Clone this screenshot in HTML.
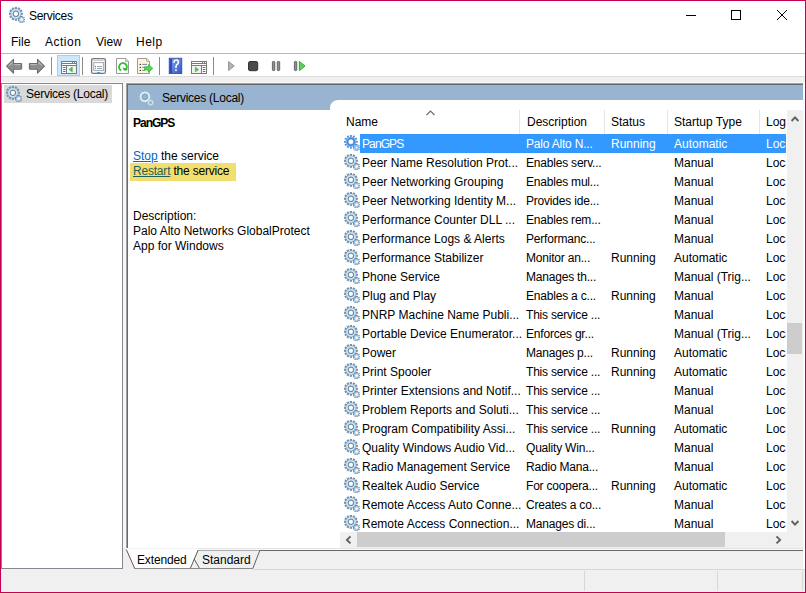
<!DOCTYPE html>
<html><head><meta charset="utf-8">
<style>
*{margin:0;padding:0;box-sizing:border-box}
html,body{width:806px;height:593px;overflow:hidden;background:#fff}
body{position:relative;font-family:"Liberation Sans",sans-serif;font-size:12px;color:#000}
.a{position:absolute}
.t{position:absolute;white-space:pre;line-height:15px;font-size:12px}
.frame{position:absolute;left:0;top:0;width:806px;height:593px;border:1px solid #c30052;pointer-events:none;z-index:50}
.sep{position:absolute;width:1px;height:18px;top:57px;background:#8c8c8c}
#list{position:absolute;left:338px;top:134px;width:448px;height:398px;overflow:hidden}
.row{position:absolute;left:0;width:448px;height:19px}
.rg{position:absolute;left:6px;top:1px}
.hl{position:absolute;left:22px;top:0;width:426px;height:19px;background:#3399ff}
.c{position:absolute;top:3px;white-space:pre;line-height:15px}
.sel .c{color:#fff}
.sel .cn{letter-spacing:-0.9px}
.cn{left:24px}
.cd{left:188px;letter-spacing:-0.2px}
.cs{left:273px}
.ct{left:336px}
.cl{left:428px}
.hd{position:absolute;top:115px;white-space:pre;line-height:15px}
.hsep{position:absolute;top:110px;width:1px;height:24px;background:#e5e5e5}
</style></head><body>

<svg width="0" height="0" style="position:absolute">
<defs>
 <radialGradient id="gg" cx="0.5" cy="0.5" r="0.5">
  <stop offset="0.5" stop-color="#8aa0b8"/>
  <stop offset="0.64" stop-color="#d6f0fa"/>
  <stop offset="0.86" stop-color="#b3d6ea"/>
  <stop offset="1" stop-color="#7c9cbc"/>
 </radialGradient>
 <radialGradient id="gs" cx="0.5" cy="0.5" r="0.5">
  <stop offset="0.3" stop-color="#ffffff"/>
  <stop offset="0.45" stop-color="#8aa6c2"/>
  <stop offset="0.7" stop-color="#c4e4f4"/>
  <stop offset="1" stop-color="#6d91b8"/>
 </radialGradient>
 <symbol id="gear" viewBox="0 0 16 16">
  <rect x="5.80" y="-0.20" width="2.20" height="2.40" fill="#7592b2" transform="rotate(0.0 6.9 6.8)"/><rect x="5.80" y="-0.20" width="2.20" height="2.40" fill="#7592b2" transform="rotate(30.0 6.9 6.8)"/><rect x="5.80" y="-0.20" width="2.20" height="2.40" fill="#7592b2" transform="rotate(60.0 6.9 6.8)"/><rect x="5.80" y="-0.20" width="2.20" height="2.40" fill="#7592b2" transform="rotate(90.0 6.9 6.8)"/><rect x="5.80" y="-0.20" width="2.20" height="2.40" fill="#7592b2" transform="rotate(120.0 6.9 6.8)"/><rect x="5.80" y="-0.20" width="2.20" height="2.40" fill="#7592b2" transform="rotate(150.0 6.9 6.8)"/><rect x="5.80" y="-0.20" width="2.20" height="2.40" fill="#7592b2" transform="rotate(180.0 6.9 6.8)"/><rect x="5.80" y="-0.20" width="2.20" height="2.40" fill="#7592b2" transform="rotate(210.0 6.9 6.8)"/><rect x="5.80" y="-0.20" width="2.20" height="2.40" fill="#7592b2" transform="rotate(240.0 6.9 6.8)"/><rect x="5.80" y="-0.20" width="2.20" height="2.40" fill="#7592b2" transform="rotate(270.0 6.9 6.8)"/><rect x="5.80" y="-0.20" width="2.20" height="2.40" fill="#7592b2" transform="rotate(300.0 6.9 6.8)"/><rect x="5.80" y="-0.20" width="2.20" height="2.40" fill="#7592b2" transform="rotate(330.0 6.9 6.8)"/>
  <circle cx="6.9" cy="6.8" r="5.4" fill="url(#gg)"/>
  <circle cx="6.9" cy="6.8" r="2.9" fill="none" stroke="#66788e" stroke-width="0.9" opacity="0.8"/>
  <circle cx="6.9" cy="6.8" r="2.1" fill="#fff"/>
  <rect x="11.95" y="8.90" width="1.30" height="1.70" fill="#6a87a6" transform="rotate(10.0 12.6 12.6)"/><rect x="11.95" y="8.90" width="1.30" height="1.70" fill="#6a87a6" transform="rotate(50.0 12.6 12.6)"/><rect x="11.95" y="8.90" width="1.30" height="1.70" fill="#6a87a6" transform="rotate(90.0 12.6 12.6)"/><rect x="11.95" y="8.90" width="1.30" height="1.70" fill="#6a87a6" transform="rotate(130.0 12.6 12.6)"/><rect x="11.95" y="8.90" width="1.30" height="1.70" fill="#6a87a6" transform="rotate(170.0 12.6 12.6)"/><rect x="11.95" y="8.90" width="1.30" height="1.70" fill="#6a87a6" transform="rotate(210.0 12.6 12.6)"/><rect x="11.95" y="8.90" width="1.30" height="1.70" fill="#6a87a6" transform="rotate(250.0 12.6 12.6)"/><rect x="11.95" y="8.90" width="1.30" height="1.70" fill="#6a87a6" transform="rotate(290.0 12.6 12.6)"/><rect x="11.95" y="8.90" width="1.30" height="1.70" fill="#6a87a6" transform="rotate(330.0 12.6 12.6)"/>
  <circle cx="12.6" cy="12.6" r="2.6" fill="#a3c2da"/>
  <circle cx="12.6" cy="12.6" r="1.7" fill="#d6ecf7"/>
  <circle cx="12.6" cy="12.6" r="0.8" fill="#fff"/>
 </symbol>
 <symbol id="gear3" viewBox="0 0 16 16">
  <rect x="6.00" y="-0.10" width="1.80" height="2.30" fill="#4f8fdc" transform="rotate(0.0 6.9 6.8)"/><rect x="6.00" y="-0.10" width="1.80" height="2.30" fill="#4f8fdc" transform="rotate(30.0 6.9 6.8)"/><rect x="6.00" y="-0.10" width="1.80" height="2.30" fill="#4f8fdc" transform="rotate(60.0 6.9 6.8)"/><rect x="6.00" y="-0.10" width="1.80" height="2.30" fill="#4f8fdc" transform="rotate(90.0 6.9 6.8)"/><rect x="6.00" y="-0.10" width="1.80" height="2.30" fill="#4f8fdc" transform="rotate(120.0 6.9 6.8)"/><rect x="6.00" y="-0.10" width="1.80" height="2.30" fill="#4f8fdc" transform="rotate(150.0 6.9 6.8)"/><rect x="6.00" y="-0.10" width="1.80" height="2.30" fill="#4f8fdc" transform="rotate(180.0 6.9 6.8)"/><rect x="6.00" y="-0.10" width="1.80" height="2.30" fill="#4f8fdc" transform="rotate(210.0 6.9 6.8)"/><rect x="6.00" y="-0.10" width="1.80" height="2.30" fill="#4f8fdc" transform="rotate(240.0 6.9 6.8)"/><rect x="6.00" y="-0.10" width="1.80" height="2.30" fill="#4f8fdc" transform="rotate(270.0 6.9 6.8)"/><rect x="6.00" y="-0.10" width="1.80" height="2.30" fill="#4f8fdc" transform="rotate(300.0 6.9 6.8)"/><rect x="6.00" y="-0.10" width="1.80" height="2.30" fill="#4f8fdc" transform="rotate(330.0 6.9 6.8)"/>
  <circle cx="6.9" cy="6.8" r="5.2" fill="#7fb6ee"/>
  <circle cx="6.9" cy="6.8" r="3.4" fill="none" stroke="#3f7fd0" stroke-width="1.2"/>
  <circle cx="6.9" cy="6.8" r="2.3" fill="#fff"/>
  <rect x="12.00" y="9.00" width="1.20" height="1.40" fill="#4f8fdc" transform="rotate(10.0 12.6 12.6)"/><rect x="12.00" y="9.00" width="1.20" height="1.40" fill="#4f8fdc" transform="rotate(50.0 12.6 12.6)"/><rect x="12.00" y="9.00" width="1.20" height="1.40" fill="#4f8fdc" transform="rotate(90.0 12.6 12.6)"/><rect x="12.00" y="9.00" width="1.20" height="1.40" fill="#4f8fdc" transform="rotate(130.0 12.6 12.6)"/><rect x="12.00" y="9.00" width="1.20" height="1.40" fill="#4f8fdc" transform="rotate(170.0 12.6 12.6)"/><rect x="12.00" y="9.00" width="1.20" height="1.40" fill="#4f8fdc" transform="rotate(210.0 12.6 12.6)"/><rect x="12.00" y="9.00" width="1.20" height="1.40" fill="#4f8fdc" transform="rotate(250.0 12.6 12.6)"/><rect x="12.00" y="9.00" width="1.20" height="1.40" fill="#4f8fdc" transform="rotate(290.0 12.6 12.6)"/><rect x="12.00" y="9.00" width="1.20" height="1.40" fill="#4f8fdc" transform="rotate(330.0 12.6 12.6)"/>
  <circle cx="12.6" cy="12.6" r="2.7" fill="#8fc0f0"/>
  <circle cx="12.6" cy="12.6" r="0.9" fill="#fff"/>
 </symbol>
 <symbol id="gear2" viewBox="0 0 16 16">
  <rect x="6.20" y="0.00" width="1.40" height="2.20" fill="#a3b9d2" transform="rotate(0.0 6.9 6.8)"/><rect x="6.20" y="0.00" width="1.40" height="2.20" fill="#a3b9d2" transform="rotate(30.0 6.9 6.8)"/><rect x="6.20" y="0.00" width="1.40" height="2.20" fill="#a3b9d2" transform="rotate(60.0 6.9 6.8)"/><rect x="6.20" y="0.00" width="1.40" height="2.20" fill="#a3b9d2" transform="rotate(90.0 6.9 6.8)"/><rect x="6.20" y="0.00" width="1.40" height="2.20" fill="#a3b9d2" transform="rotate(120.0 6.9 6.8)"/><rect x="6.20" y="0.00" width="1.40" height="2.20" fill="#a3b9d2" transform="rotate(150.0 6.9 6.8)"/><rect x="6.20" y="0.00" width="1.40" height="2.20" fill="#a3b9d2" transform="rotate(180.0 6.9 6.8)"/><rect x="6.20" y="0.00" width="1.40" height="2.20" fill="#a3b9d2" transform="rotate(210.0 6.9 6.8)"/><rect x="6.20" y="0.00" width="1.40" height="2.20" fill="#a3b9d2" transform="rotate(240.0 6.9 6.8)"/><rect x="6.20" y="0.00" width="1.40" height="2.20" fill="#a3b9d2" transform="rotate(270.0 6.9 6.8)"/><rect x="6.20" y="0.00" width="1.40" height="2.20" fill="#a3b9d2" transform="rotate(300.0 6.9 6.8)"/><rect x="6.20" y="0.00" width="1.40" height="2.20" fill="#a3b9d2" transform="rotate(330.0 6.9 6.8)"/>
  <circle cx="6.9" cy="6.8" r="4.1" fill="none" stroke="#d6f1fb" stroke-width="2.2"/>
  <circle cx="6.9" cy="6.8" r="2.9" fill="none" stroke="#7d8ea3" stroke-width="0.8"/>
  <rect x="12.10" y="9.10" width="1.00" height="1.50" fill="#b2c6da" transform="rotate(10.0 12.6 12.6)"/><rect x="12.10" y="9.10" width="1.00" height="1.50" fill="#b2c6da" transform="rotate(50.0 12.6 12.6)"/><rect x="12.10" y="9.10" width="1.00" height="1.50" fill="#b2c6da" transform="rotate(90.0 12.6 12.6)"/><rect x="12.10" y="9.10" width="1.00" height="1.50" fill="#b2c6da" transform="rotate(130.0 12.6 12.6)"/><rect x="12.10" y="9.10" width="1.00" height="1.50" fill="#b2c6da" transform="rotate(170.0 12.6 12.6)"/><rect x="12.10" y="9.10" width="1.00" height="1.50" fill="#b2c6da" transform="rotate(210.0 12.6 12.6)"/><rect x="12.10" y="9.10" width="1.00" height="1.50" fill="#b2c6da" transform="rotate(250.0 12.6 12.6)"/><rect x="12.10" y="9.10" width="1.00" height="1.50" fill="#b2c6da" transform="rotate(290.0 12.6 12.6)"/><rect x="12.10" y="9.10" width="1.00" height="1.50" fill="#b2c6da" transform="rotate(330.0 12.6 12.6)"/>
  <circle cx="12.6" cy="12.6" r="2.1" fill="none" stroke="#d0e4ef" stroke-width="1.1"/>
 </symbol>
</defs></svg>
<div class="frame"></div>

<!-- title bar -->
<svg class="a" style="left:9px;top:7px" width="16" height="16"><use href="#gear"/></svg>
<div class="t" style="left:29px;top:9px;letter-spacing:-0.3px">Services</div>
<div class="a" style="left:686px;top:15px;width:10px;height:1px;background:#000"></div>
<div class="a" style="left:731px;top:10px;width:10px;height:10px;border:1px solid #000"></div>
<svg class="a" style="left:776px;top:9px" width="12" height="12"><path d="M1 1L11 11M11 1L1 11" stroke="#000" stroke-width="1"/></svg>

<!-- menu -->
<div class="t" style="left:11px;top:35px">File</div>
<div class="t" style="left:45px;top:35px;letter-spacing:0.5px">Action</div>
<div class="t" style="left:96px;top:35px">View</div>
<div class="t" style="left:136px;top:35px;letter-spacing:0.5px">Help</div>
<div class="a" style="left:1px;top:53px;width:804px;height:1px;background:#b9b9b9"></div>

<!-- toolbar -->

<svg class="a" style="left:0;top:54px" width="320" height="22" viewBox="0 54 320 22">
 <defs>
  <linearGradient id="ag" x1="0" y1="0" x2="0" y2="1">
   <stop offset="0" stop-color="#b8b8b8"/><stop offset="0.5" stop-color="#8a8a8a"/><stop offset="1" stop-color="#a0a0a0"/>
  </linearGradient>
  <linearGradient id="hb" x1="0" y1="0" x2="1" y2="1">
   <stop offset="0" stop-color="#8aa6ee"/><stop offset="1" stop-color="#3056c8"/>
  </linearGradient>
 </defs>
 <!-- back arrow -->
 <path d="M6.6,66.2 L13.5,59.4 L13.5,63.6 L21,63.6 Q21.6,63.6 21.6,64.2 L21.6,68.6 Q21.6,69.2 21,69.2 L13.5,69.2 L13.5,73.2 Z" fill="url(#ag)" stroke="#6c6c6c" stroke-width="1.1" stroke-linejoin="round"/>
 <path d="M8.4,66.2 L12.4,62.3 M14.3,64.6 L20.5,64.6" stroke="#d6d6d6" stroke-width="0.7" fill="none"/>
 <!-- forward arrow -->
 <path d="M44.4,66.2 L37.5,59.4 L37.5,63.6 L30,63.6 Q29.4,63.6 29.4,64.2 L29.4,68.6 Q29.4,69.2 30,69.2 L37.5,69.2 L37.5,73.2 Z" fill="url(#ag)" stroke="#6c6c6c" stroke-width="1.1" stroke-linejoin="round"/>
 <path d="M42.6,66.2 L38.6,62.3 M36.7,64.6 L30.5,64.6" stroke="#d6d6d6" stroke-width="0.7" fill="none"/>

 <!-- pressed button -->
 <rect x="57.5" y="55.5" width="22" height="20" fill="#cce8ff" stroke="#99d1ff" stroke-width="1"/>
 <!-- console tree icon -->
 <rect x="61.5" y="61.5" width="15" height="12" fill="#fff" stroke="#7b7b7b" stroke-width="1"/>
 <rect x="62" y="63" width="14" height="1" fill="#7b7b7b"/>
 <rect x="62" y="65" width="14" height="1" fill="#7b7b7b"/>
 <rect x="72" y="62" width="1" height="1" fill="#7b7b7b"/><rect x="74" y="62" width="1" height="1" fill="#7b7b7b"/>
 <rect x="67" y="66" width="9" height="7" fill="#f2f2f2"/>
 <rect x="66" y="66" width="1" height="7" fill="#727c94"/>
 <path d="M63.4,67.5 H65.2 M63.4,69.5 H65.2 M63.4,71.5 H65.2" stroke="#3c78c8" stroke-width="1.1" stroke-linecap="round"/>
 <path d="M72.3,67 L69,69.5 L72.3,72 Z" fill="#4cc04c" stroke="#3ab03a" stroke-width="0.5"/>

 <!-- properties icon -->
 <rect x="91.6" y="58.6" width="13.8" height="14.8" rx="1.5" fill="#fff" stroke="#767676" stroke-width="1.3"/>
 <path d="M92.5,60.5 H103.5" stroke="#c8c8c8" stroke-width="1"/>
 <rect x="93.8" y="62.6" width="9.6" height="8" fill="#fff" stroke="#a3a3b5" stroke-width="1"/>
 <circle cx="95.4" cy="66.5" r="0.7" fill="#00a8ff"/>
 <circle cx="95.4" cy="68.5" r="0.6" fill="#777"/>
 <path d="M97,66.5 H102 M97,68.5 H102" stroke="#8a8a8a" stroke-width="0.8"/>
 <path d="M97,72.6 H100.2" stroke="#14b4ff" stroke-width="1.2"/>

 <!-- refresh icon -->
 <path d="M116.5,58.5 H125.8 L128.5,61.2 V73.5 H116.5 Z" fill="#fff" stroke="#9b9b9b" stroke-width="1"/>
 <path d="M125.6,58.8 V61.4 H128.3" fill="#e8e8e8" stroke="#9b9b9b" stroke-width="0.8"/>
 <path d="M125.2,70.2 A3.9,3.9 0 1 0 121.2,70.5" fill="none" stroke="#33c033" stroke-width="1.9"/>
 <path d="M122.5,67.2 L124,70.6 L127.8,69.6 Z" fill="#20b020"/>

 <!-- export list icon -->
 <path d="M137.5,58.5 H146.8 L149.5,61.2 V73.5 H137.5 Z" fill="#fdf5da" stroke="#9b9b9b" stroke-width="1"/>
 <path d="M146.6,58.8 V61.4 H149.3" fill="#eee" stroke="#9b9b9b" stroke-width="0.8"/>
 <circle cx="140.3" cy="64.4" r="0.7" fill="#222"/><circle cx="140.3" cy="67.4" r="0.7" fill="#222"/><circle cx="140.3" cy="70.4" r="0.7" fill="#222"/>
 <path d="M142.2,64.4 H147 M142.2,67.4 H145 M142.2,70.4 H145" stroke="#7070a8" stroke-width="0.9"/>
 <path d="M144.6,66.8 H148.4 V64.6 L152.8,68.4 L148.4,72.2 V70 H144.6 Z" fill="#5ad25a" stroke="#36b436" stroke-width="0.8" stroke-linejoin="round"/>

 <!-- help icon -->
 <rect x="169.2" y="58.2" width="12.6" height="15.4" fill="url(#hb)" stroke="#2a48a8" stroke-width="0.8"/>
 <rect x="169.6" y="58.6" width="2.4" height="14.6" fill="#2c4cb8"/>
 <path d="M173.9,62.1 Q174.4,60 176.3,60 Q178.4,60 178.4,62.2 Q178.4,63.6 176.9,64.6 Q176,65.3 176,66.6 V67.4" fill="none" stroke="#fff" stroke-width="1.6" stroke-linecap="round"/>
 <circle cx="176" cy="70.2" r="0.95" fill="#fff"/>

 <!-- action pane icon -->
 <rect x="191.5" y="61.5" width="15" height="12" fill="#fff" stroke="#7b7b7b" stroke-width="1"/>
 <rect x="192" y="63" width="14" height="1" fill="#7b7b7b"/>
 <rect x="192" y="65" width="14" height="1" fill="#7b7b7b"/>
 <rect x="202" y="62" width="1" height="1" fill="#7b7b7b"/><rect x="204" y="62" width="1" height="1" fill="#7b7b7b"/>
 <rect x="192" y="66" width="9" height="7" fill="#f2f2f2"/>
 <rect x="201" y="66" width="1" height="7" fill="#727c94"/>
 <path d="M203.2,67.5 H205 M203.2,69.5 H205 M203.2,71.5 H205" stroke="#3c78c8" stroke-width="1.1" stroke-linecap="round"/>
 <path d="M195.3,67 L198.6,69.5 L195.3,72 Z" fill="#4cc04c" stroke="#3ab03a" stroke-width="0.5"/>

 <!-- play (disabled) -->
 <path d="M228.6,61.5 L234.2,66 L228.6,70.5 Z" fill="#b4b4b4" stroke="#8c8c8c" stroke-width="0.9" stroke-linejoin="round"/>
 <!-- stop -->
 <rect x="248.5" y="61.5" width="9.2" height="9.2" rx="1.6" fill="#4c4c4c" stroke="#343434" stroke-width="1"/>
 <!-- pause -->
 <rect x="272.4" y="61.4" width="2.4" height="9.2" rx="0.8" fill="#8e8e8e" stroke="#5e5e5e" stroke-width="0.9"/>
 <rect x="277.3" y="61.4" width="2.4" height="9.2" rx="0.8" fill="#8e8e8e" stroke="#5e5e5e" stroke-width="0.9"/>
 <!-- restart -->
 <rect x="294.4" y="61.4" width="2.4" height="9.2" rx="0.8" fill="#8e8e8e" stroke="#5e5e5e" stroke-width="0.9"/>
 <path d="M299.4,61.4 L305,66 L299.4,70.6 Z" fill="#5ad25a" stroke="#2ea82e" stroke-width="1" stroke-linejoin="round"/>
</svg>
<div class="sep" style="left:51px"></div>
<div class="sep" style="left:82px"></div>
<div class="sep" style="left:159px"></div>
<div class="sep" style="left:213px"></div>

<!-- gray band below toolbar -->
<div class="a" style="left:1px;top:76px;width:804px;height:1px;background:#dcdcdc"></div><div class="a" style="left:1px;top:77px;width:804px;height:7px;background:#f0f0f0"></div><div class="a" style="left:1px;top:82px;width:804px;height:1px;background:#f8f8f8"></div>

<!-- left pane -->
<div class="a" style="left:1px;top:83px;width:122px;height:486px;border:1px solid #828790;background:#fff"></div>
<div class="a" style="left:4px;top:85px;width:108px;height:18px;background:#d9d9d9"></div>
<svg class="a" style="left:6px;top:86px" width="16" height="16"><use href="#gear"/></svg>
<div class="t" style="left:26px;top:87px;letter-spacing:-0.25px">Services (Local)</div>

<!-- gap between panes -->
<div class="a" style="left:123px;top:83px;width:3px;height:465px;background:#f7f7f7"></div>

<!-- right pane -->
<div class="a" style="left:126px;top:83px;width:677px;height:466px;background:#fff;border-left:1px solid #a0a0a0;border-top:1px solid #a0a0a0"></div><div class="a" style="left:127px;top:84px;width:676px;height:465px;background:#fff;border-left:1px solid #696969;border-top:1px solid #696969"></div><div class="a" style="left:803px;top:85px;width:1px;height:464px;background:#f8f8f8"></div>
<div class="a" style="left:128px;top:85px;width:675px;height:25px;background:#99b4d1"></div>
<div class="a" style="left:330px;top:100px;width:473px;height:20px;background:#fff;border-top-left-radius:8px"></div>
<svg class="a" style="left:138.4px;top:90.4px" width="16" height="16"><use href="#gear2"/></svg>
<div class="t" style="left:162px;top:91px;letter-spacing:-0.25px">Services (Local)</div>

<!-- description -->
<div class="t" style="left:133px;top:116px;font-weight:bold;letter-spacing:-1px">PanGPS</div>
<div class="t" style="left:133px;top:149px"><span style="color:#0066cc;text-decoration:underline">Stop</span> the service</div>
<div class="a" style="left:130px;top:163px;width:106px;height:18px;background:#f2de6f"></div>
<div class="t" style="left:133px;top:164px;letter-spacing:-0.2px"><span style="color:#1f5f5a;text-decoration:underline">Restart</span> the service</div>
<div class="t" style="left:133px;top:209px">Description:</div>
<div class="t" style="left:133px;top:224px">Palo Alto Networks GlobalProtect</div>
<div class="t" style="left:133px;top:239px">App for Windows</div>

<!-- list header -->
<div class="hd" style="left:346px">Name</div>
<svg class="a" style="left:426px;top:110px" width="9" height="6"><path d="M0.5 5L4.5 1L8.5 5" stroke="#6d6d6d" fill="none" stroke-width="1.2"/></svg>
<div class="hsep" style="left:519px"></div>
<div class="hd" style="left:527px">Description</div>
<div class="hsep" style="left:604px"></div>
<div class="hd" style="left:611px">Status</div>
<div class="hsep" style="left:667px"></div>
<div class="hd" style="left:674px">Startup Type</div>
<div class="hsep" style="left:759px"></div>
<div class="hd" style="left:766px;width:20px;overflow:hidden">Log On As</div>

<div id="list">
<div class="row sel" style="top:0px"><svg class="rg" width="16" height="16"><use href="#gear3"/></svg><div class="hl"></div><span class="c cn">PanGPS</span><span class="c cd">Palo Alto N...</span><span class="c cs">Running</span><span class="c ct">Automatic</span><span class="c cl">Local System</span></div><div class="row" style="top:19px"><svg class="rg" width="16" height="16"><use href="#gear"/></svg><span class="c cn">Peer Name Resolution Prot...</span><span class="c cd">Enables serv...</span><span class="c cs"></span><span class="c ct">Manual</span><span class="c cl">Local System</span></div><div class="row" style="top:38px"><svg class="rg" width="16" height="16"><use href="#gear"/></svg><span class="c cn">Peer Networking Grouping</span><span class="c cd">Enables mul...</span><span class="c cs"></span><span class="c ct">Manual</span><span class="c cl">Local System</span></div><div class="row" style="top:57px"><svg class="rg" width="16" height="16"><use href="#gear"/></svg><span class="c cn">Peer Networking Identity M...</span><span class="c cd">Provides ide...</span><span class="c cs"></span><span class="c ct">Manual</span><span class="c cl">Local System</span></div><div class="row" style="top:76px"><svg class="rg" width="16" height="16"><use href="#gear"/></svg><span class="c cn">Performance Counter DLL ...</span><span class="c cd">Enables rem...</span><span class="c cs"></span><span class="c ct">Manual</span><span class="c cl">Local System</span></div><div class="row" style="top:95px"><svg class="rg" width="16" height="16"><use href="#gear"/></svg><span class="c cn">Performance Logs &amp; Alerts</span><span class="c cd">Performanc...</span><span class="c cs"></span><span class="c ct">Manual</span><span class="c cl">Local System</span></div><div class="row" style="top:114px"><svg class="rg" width="16" height="16"><use href="#gear"/></svg><span class="c cn">Performance Stabilizer</span><span class="c cd">Monitor an...</span><span class="c cs">Running</span><span class="c ct">Automatic</span><span class="c cl">Local System</span></div><div class="row" style="top:133px"><svg class="rg" width="16" height="16"><use href="#gear"/></svg><span class="c cn">Phone Service</span><span class="c cd">Manages th...</span><span class="c cs"></span><span class="c ct">Manual (Trig...</span><span class="c cl">Local System</span></div><div class="row" style="top:152px"><svg class="rg" width="16" height="16"><use href="#gear"/></svg><span class="c cn">Plug and Play</span><span class="c cd">Enables a c...</span><span class="c cs">Running</span><span class="c ct">Manual</span><span class="c cl">Local System</span></div><div class="row" style="top:171px"><svg class="rg" width="16" height="16"><use href="#gear"/></svg><span class="c cn">PNRP Machine Name Publi...</span><span class="c cd">This service ...</span><span class="c cs"></span><span class="c ct">Manual</span><span class="c cl">Local System</span></div><div class="row" style="top:190px"><svg class="rg" width="16" height="16"><use href="#gear"/></svg><span class="c cn">Portable Device Enumerator...</span><span class="c cd">Enforces gr...</span><span class="c cs"></span><span class="c ct">Manual (Trig...</span><span class="c cl">Local System</span></div><div class="row" style="top:209px"><svg class="rg" width="16" height="16"><use href="#gear"/></svg><span class="c cn">Power</span><span class="c cd">Manages p...</span><span class="c cs">Running</span><span class="c ct">Automatic</span><span class="c cl">Local System</span></div><div class="row" style="top:228px"><svg class="rg" width="16" height="16"><use href="#gear"/></svg><span class="c cn">Print Spooler</span><span class="c cd">This service ...</span><span class="c cs">Running</span><span class="c ct">Automatic</span><span class="c cl">Local System</span></div><div class="row" style="top:247px"><svg class="rg" width="16" height="16"><use href="#gear"/></svg><span class="c cn">Printer Extensions and Notif...</span><span class="c cd">This service ...</span><span class="c cs"></span><span class="c ct">Manual</span><span class="c cl">Local System</span></div><div class="row" style="top:266px"><svg class="rg" width="16" height="16"><use href="#gear"/></svg><span class="c cn">Problem Reports and Soluti...</span><span class="c cd">This service ...</span><span class="c cs"></span><span class="c ct">Manual</span><span class="c cl">Local System</span></div><div class="row" style="top:285px"><svg class="rg" width="16" height="16"><use href="#gear"/></svg><span class="c cn">Program Compatibility Assi...</span><span class="c cd">This service ...</span><span class="c cs">Running</span><span class="c ct">Automatic</span><span class="c cl">Local System</span></div><div class="row" style="top:304px"><svg class="rg" width="16" height="16"><use href="#gear"/></svg><span class="c cn">Quality Windows Audio Vid...</span><span class="c cd">Quality Win...</span><span class="c cs"></span><span class="c ct">Manual</span><span class="c cl">Local System</span></div><div class="row" style="top:323px"><svg class="rg" width="16" height="16"><use href="#gear"/></svg><span class="c cn">Radio Management Service</span><span class="c cd">Radio Mana...</span><span class="c cs"></span><span class="c ct">Manual</span><span class="c cl">Local System</span></div><div class="row" style="top:342px"><svg class="rg" width="16" height="16"><use href="#gear"/></svg><span class="c cn">Realtek Audio Service</span><span class="c cd">For coopera...</span><span class="c cs">Running</span><span class="c ct">Automatic</span><span class="c cl">Local System</span></div><div class="row" style="top:361px"><svg class="rg" width="16" height="16"><use href="#gear"/></svg><span class="c cn">Remote Access Auto Conne...</span><span class="c cd">Creates a co...</span><span class="c cs"></span><span class="c ct">Manual</span><span class="c cl">Local System</span></div><div class="row" style="top:380px"><svg class="rg" width="16" height="16"><use href="#gear"/></svg><span class="c cn">Remote Access Connection...</span><span class="c cd">Manages di...</span><span class="c cs"></span><span class="c ct">Manual</span><span class="c cl">Local System</span></div>
</div>

<!-- vertical scrollbar -->
<div class="a" style="left:787px;top:110px;width:16px;height:422px;background:#f0f0f0"></div>
<svg class="a" style="left:790px;top:114px" width="10" height="10"><path d="M1.6 7L5 3.4L8.4 7" stroke="#606060" fill="none" stroke-width="1.9"/></svg>
<div class="a" style="left:787px;top:323px;width:15px;height:31px;background:#cdcdcd"></div>
<svg class="a" style="left:790px;top:518px" width="10" height="10"><path d="M1.6 3L5 6.6L8.4 3" stroke="#606060" fill="none" stroke-width="1.9"/></svg>

<!-- horizontal scrollbar -->
<div class="a" style="left:340px;top:532px;width:463px;height:16px;background:#f0f0f0"></div>
<div class="a" style="left:357px;top:532px;width:368px;height:15px;background:#cdcdcd"></div>
<svg class="a" style="left:344px;top:535px" width="9" height="10"><path d="M6.5 1.4L2.9 4.9L6.5 8.4" stroke="#606060" fill="none" stroke-width="1.9"/></svg>
<svg class="a" style="left:774px;top:535px" width="9" height="10"><path d="M2.5 1.4L6.1 4.9L2.5 8.4" stroke="#606060" fill="none" stroke-width="1.9"/></svg>

<!-- tabs strip -->
<svg class="a" style="left:0;top:540px" width="806" height="32" viewBox="0 540 806 32">
 <rect x="123" y="548" width="680" height="21" fill="#f0f0f0"/>
 <rect x="128" y="548" width="675" height="1" fill="#e3e3e3"/>
 <rect x="198" y="549" width="605" height="1" fill="#fafafa"/>
 <rect x="198" y="550" width="605" height="1" fill="#696969"/>
 <path d="M190.5,550.5 L259.8,550.5 L252.8,568.5 L199.5,568.5 Z" fill="#f0f0f0"/>
 <path d="M259.8,550.5 L252.8,568.5" stroke="#606060" stroke-width="1" fill="none"/>
 <path d="M194.2,559 L199.6,568.5" stroke="#606060" stroke-width="1" fill="none"/>
 <rect x="134" y="568" width="119" height="1" fill="#8a8a8a"/>
 <path d="M126,548.6 L198.2,548.6 L190.6,568 L134.6,568 Z" fill="#fff"/>
 <path d="M126.3,549.5 L134.6,568.2" stroke="#5a5a5a" stroke-width="1" fill="none"/>
 <path d="M198.2,550 L190.4,568.2" stroke="#5a5a5a" stroke-width="1" fill="none"/>
</svg>
<div class="t" style="left:137px;top:553px;letter-spacing:-0.15px">Extended</div>
<div class="t" style="left:202px;top:553px">Standard</div>

<!-- status bar -->
<div class="a" style="left:1px;top:569px;width:804px;height:1px;background:#f0f0f0"></div><div class="a" style="left:253px;top:569px;width:552px;height:1px;background:#d7d7d7"></div>
<div class="a" style="left:1px;top:570px;width:804px;height:22px;background:#f0f0f0"></div>
<div class="a" style="left:584px;top:571px;width:1px;height:20px;background:#d7d7d7"></div>
<div class="a" style="left:717px;top:571px;width:1px;height:20px;background:#d7d7d7"></div><div class="a" style="left:802px;top:571px;width:1px;height:20px;background:#d7d7d7"></div>
</body></html>
